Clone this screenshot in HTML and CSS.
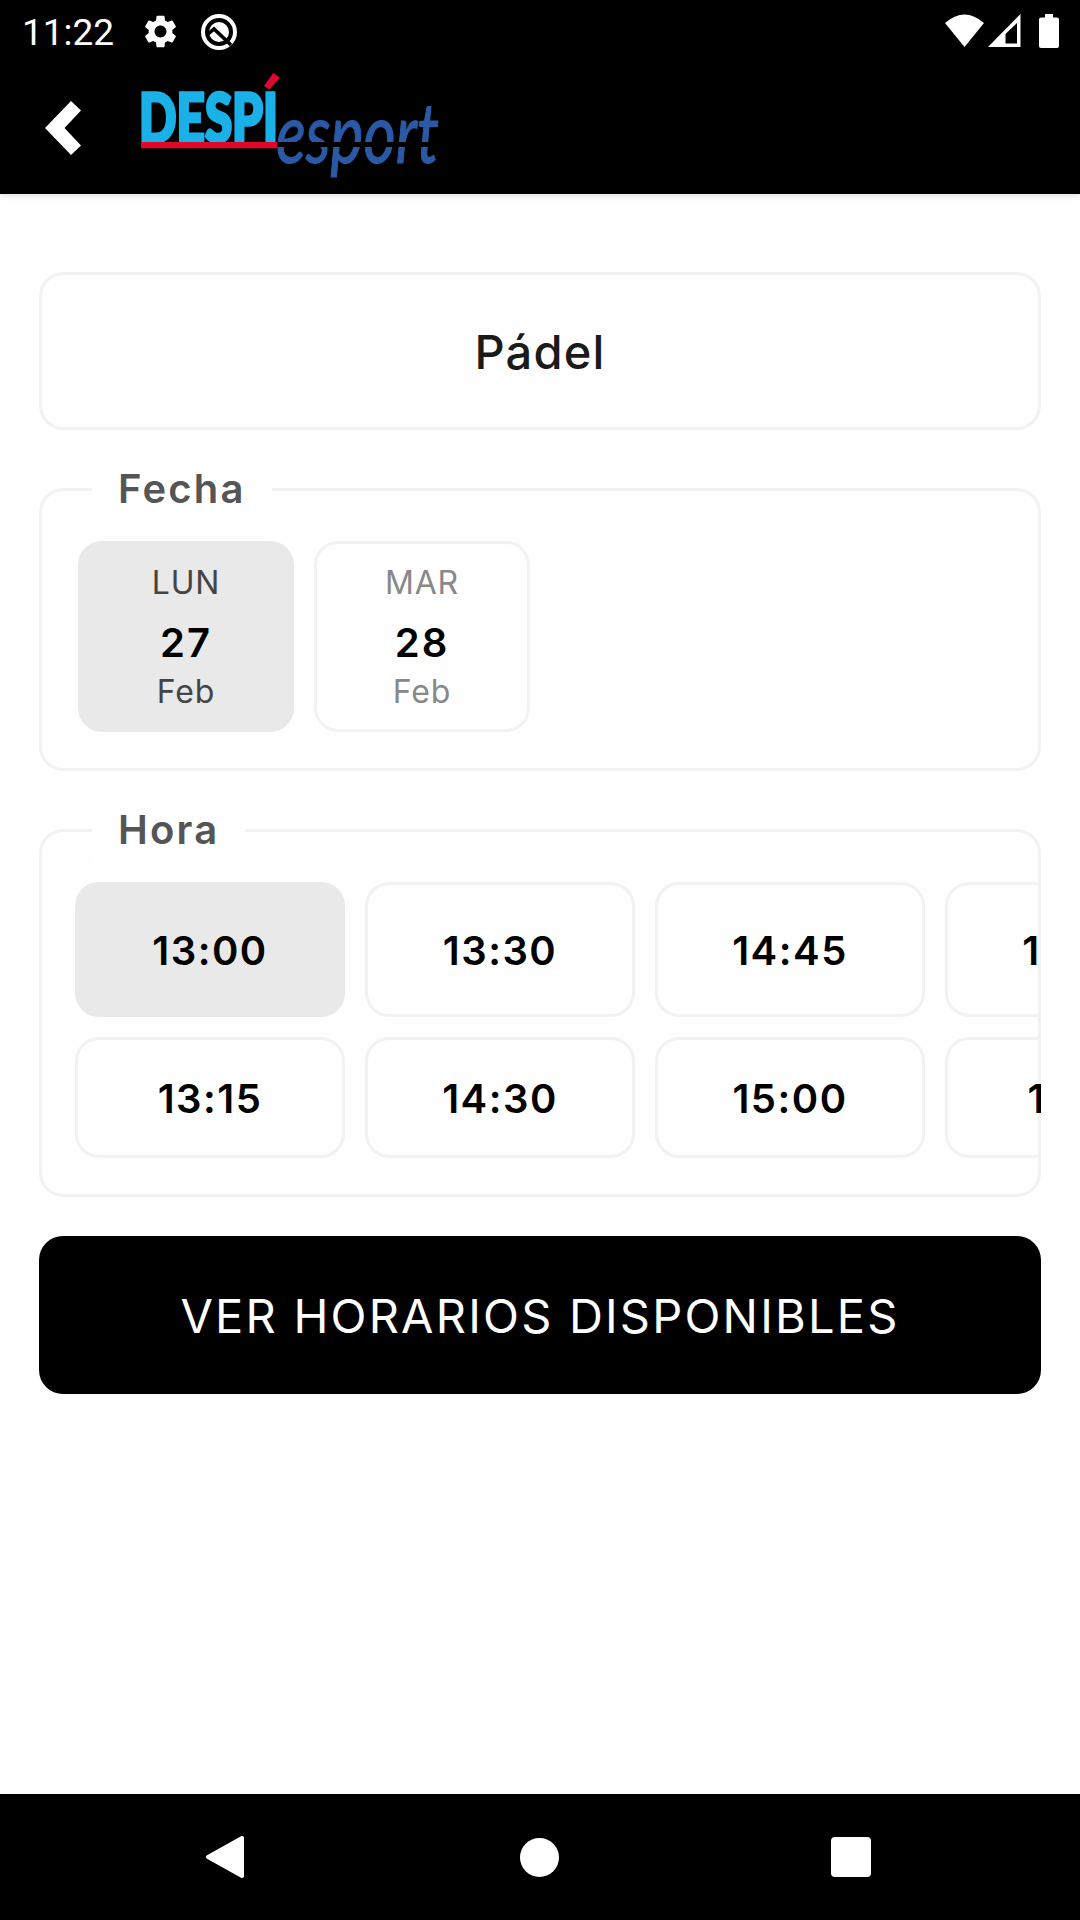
FILE: index.html
```html
<!DOCTYPE html>
<html lang="es">
<head>
  <meta charset="UTF-8">
  <meta name="viewport" content="width=device-width, initial-scale=1.0">
  <title>Despí Esport - Pádel</title>
  <link rel="stylesheet" href="styles.css">
</head>
<body>
  <div class="status-bar">
    <span class="clock">11:22</span>
    <svg class="icon-gear" viewBox="2 2 20 20"><path fill="#fff" d="M19.14 12.94c.04-.3.06-.61.06-.94 0-.32-.02-.64-.07-.94l2.03-1.58c.18-.14.23-.41.12-.61l-1.92-3.32c-.12-.22-.37-.29-.59-.22l-2.39.96c-.5-.38-1.03-.7-1.62-.94l-.36-2.54c-.04-.24-.24-.41-.48-.41h-3.84c-.24 0-.43.17-.47.41l-.36 2.54c-.59.24-1.13.57-1.62.94l-2.39-.96c-.22-.08-.47 0-.59.22L2.74 8.87c-.12.21-.08.47.12.61l2.03 1.58c-.05.3-.09.63-.09.94s.02.64.07.94l-2.03 1.58c-.18.14-.23.41-.12.61l1.92 3.32c.12.22.37.29.59.22l2.39-.96c.5.38 1.03.7 1.62.94l.36 2.54c.05.24.24.41.48.41h3.84c.24 0 .44-.17.47-.41l.36-2.54c.59-.24 1.13-.56 1.62-.94l2.39.96c.22.08.47 0 .59-.22l1.92-3.32c.12-.22.07-.47-.12-.61l-2.01-1.58zM12 15.6c-1.98 0-3.6-1.62-3.6-3.6s1.62-3.6 3.6-3.6 3.6 1.62 3.6 3.6-1.62 3.6-3.6 3.6z"/></svg>
    <svg class="icon-q" viewBox="0 0 36 36">
      <circle cx="18" cy="18" r="16" fill="none" stroke="#fff" stroke-width="4"/>
      <circle cx="18" cy="18" r="10" fill="#fff"/>
      <path d="M6.500 20.500l6.500-5.500 17 16" fill="none" stroke="#000" stroke-width="3.600"/>
    </svg>
    <div class="status-right">
      <svg width="39" height="34" viewBox="0 0 39 34"><path fill="#fff" d="M0 9Q19.500 -8 39 9L19.500 33z"/></svg>
      <svg width="33" height="34" viewBox="0 0 33 34"><path fill="#fff" fill-rule="evenodd" d="M0 33L32.500 0V33zM17.500 29.500H29V9L17.500 20z"/></svg>
      <svg class="icon-battery" width="20" height="34" viewBox="0 0 20 34"><path fill="#fff" d="M6 0h8v3.500h4a2 2 0 0 1 2 2V32a2 2 0 0 1-2 2H2a2 2 0 0 1-2-2V5.500a2 2 0 0 1 2-2h4z"/></svg>
    </div>
  </div>

  <header class="app-bar">
    <svg class="icon-back" viewBox="0 0 36 54"><path fill="#fff" d="M26 0l10 9.500L19.500 27 36 44.500 26 54 0 27z"/></svg>
    <svg class="logo" viewBox="0 0 300 114">
      <text class="logo-despi" x="-2" y="69" textLength="139" lengthAdjust="spacingAndGlyphs">DESPI</text>
      <text class="logo-esport" x="135" y="90" textLength="163" lengthAdjust="spacingAndGlyphs">esport</text>
      <path fill="#000" d="M136 69h164v5H136z"/>
      <path fill="#e2062c" d="M0 69h136v6.300H0zM132.300 0l6.700 4.500-10.500 12-5.500-3.500z"/>
    </svg>
  </header>

  <main class="content">
    <div class="card title-card">Pádel</div>

    <fieldset class="card group">
      <legend>Fecha</legend>
      <div class="days">
        <div class="day selected">
          <span class="label">LUN</span>
          <span class="number">27</span>
          <span class="label">Feb</span>
        </div>
        <div class="day">
          <span class="label">MAR</span>
          <span class="number">28</span>
          <span class="label">Feb</span>
        </div>
      </div>
    </fieldset>

    <fieldset class="card group group-hours">
      <legend>Hora</legend>
      <div class="hours">
        <div class="hour selected">13:00</div>
        <div class="hour">13:15</div>
        <div class="hour">13:30</div>
        <div class="hour">14:30</div>
        <div class="hour">14:45</div>
        <div class="hour">15:00</div>
        <div class="hour">16:00</div>
        <div class="hour">16:15</div>
      </div>
    </fieldset>

    <button class="submit-btn">VER HORARIOS DISPONIBLES</button>
  </main>

  <nav class="nav-bar">
    <svg width="38" height="42" viewBox="0 0 38 42"><path fill="#fff" stroke="#fff" stroke-width="4" stroke-linejoin="round" d="M2 21L36 2v38z"/></svg>
    <span class="nav-home"></span>
    <span class="nav-recent"></span>
  </nav>
</body>
</html>
```
FILE: styles.css
```css
:root {
  --border: #f2f2f2;
  --surface: #fefefe;
  --selected: #e9e9e9;
}

* {
  box-sizing: border-box;
}

body {
  font-family: Inter, 'Open Sans', sans-serif;
  margin: 0;
  height: 1920px;
  display: flex;
  flex-direction: column;
  background-color: #fff;
  color: #000;
  overflow: hidden;
}

svg {
  display: block;
  flex-shrink: 0;
}

.status-bar {
  height: 63px;
  padding: 0 21px 0 22px;
  display: flex;
  align-items: center;
  background-color: #000;
  color: #fff;
}

.clock {
  font-family: Roboto, sans-serif;
  font-size: 37px;
  line-height: 63px;
  width: 122px;
  padding-top: 2px;
}

.icon-gear {
  width: 33px;
  height: 33px;
}

.icon-q {
  width: 36px;
  height: 36px;
  margin-left: 24px;
}

.status-right {
  margin-left: auto;
  display: flex;
  gap: 4px;
  padding-bottom: 2px;
}

.icon-battery {
  margin-left: 14px;
}

.app-bar {
  height: 131px;
  padding-left: 45px;
  display: flex;
  align-items: flex-start;
  background-color: #000;
  box-shadow: 0 2px 6px rgba(0, 0, 0, 0.12);
}

.icon-back {
  width: 36px;
  height: 54px;
  margin-top: 38px;
}

.logo {
  width: 300px;
  height: 114px;
  margin: 10px 0 0 60px;
  overflow: visible;
}

.logo-despi {
  font-family: Lato, sans-serif;
  font-size: 67px;
  font-weight: 900;
  fill: #1ab0e8;
  stroke: #1ab0e8;
  stroke-width: 3.5px;
}

.logo-esport {
  font-family: Lato, sans-serif;
  font-size: 83px;
  font-weight: 400;
  font-style: italic;
  fill: #2a5aa6;
  stroke: #2a5aa6;
  stroke-width: 1.2px;
}

.content {
  flex: 1;
  padding: 78px 39px 0;
}

.card {
  border: 3px solid var(--border);
  border-radius: 24px;
  background-color: var(--surface);
}

.title-card {
  height: 158px;
  display: flex;
  align-items: center;
  justify-content: center;
  font-size: 47px;
  font-weight: 500;
  letter-spacing: 1.2px;
  color: #1a1a1a;
}

.group {
  margin: 27px 0 0;
  padding: 0 34px 36px 36px;
  min-width: 0;
}

.group legend {
  margin-left: 14px;
  padding: 0 26px;
  background-color: #fff;
  font-size: 40px;
  font-weight: 600;
  letter-spacing: 2.2px;
  line-height: 64px;
  color: #555;
}

.days {
  display: flex;
  gap: 20px;
  padding-top: 20px;
}

.day {
  width: 216px;
  height: 191px;
  display: flex;
  flex-direction: column;
  align-items: center;
  border: 3px solid var(--border);
  border-radius: 24px;
  color: #888;
}

.day .label {
  font-size: 32px;
  font-weight: 400;
  letter-spacing: 0.8px;
  line-height: 44px;
  padding-top: 17px;
}

.day .number {
  font-size: 40px;
  font-weight: 600;
  letter-spacing: 2px;
  line-height: 48px;
  padding-top: 14px;
  color: #000;
}

.day .number + .label {
  padding-top: 3px;
}

.day.selected {
  background-color: var(--selected);
  border-color: var(--selected);
  color: #444;
}

.group-hours {
  margin-top: 27px;
  padding-left: 33px;
  padding-right: 0;
}

.group-hours legend {
  margin-left: 17px;
}

.hours {
  display: grid;
  grid-template-rows: 135px 121px;
  grid-auto-flow: column;
  grid-auto-columns: 270px;
  gap: 20px;
  padding-top: 20px;
  margin-right: -3px;
  overflow: hidden;
}

.hour {
  display: flex;
  align-items: center;
  justify-content: center;
  padding-top: 2px;
  border: 3px solid var(--border);
  border-radius: 24px;
  font-size: 40px;
  font-weight: 600;
  letter-spacing: 1.5px;
}

.hour.selected {
  background-color: var(--selected);
  border-color: var(--selected);
}

.submit-btn {
  display: block;
  width: 100%;
  height: 158px;
  margin-top: 39px;
  padding: 0;
  border: none;
  border-radius: 24px;
  background-color: #000;
  color: #fff;
  font-family: inherit;
  font-size: 47px;
  font-weight: 400;
  letter-spacing: 2.2px;
}

.nav-bar {
  height: 126px;
  padding: 0 209px 0 206px;
  display: flex;
  align-items: center;
  justify-content: space-between;
  background-color: #000;
}

.nav-home {
  width: 39px;
  height: 39px;
  margin-left: 4px;
  border-radius: 50%;
  background-color: #fff;
}

.nav-recent {
  width: 40px;
  height: 40px;
  border-radius: 4px;
  background-color: #fff;
}
```
